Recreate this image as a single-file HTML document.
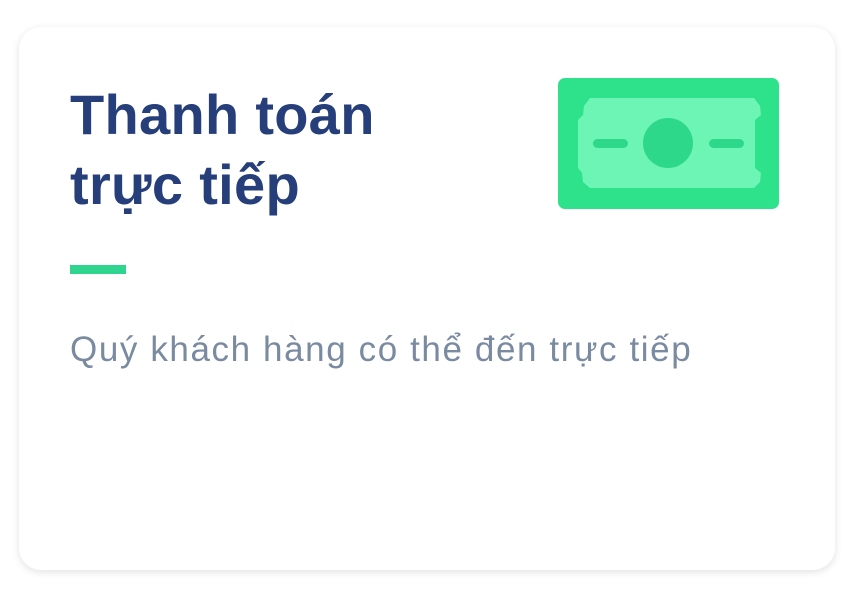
<!DOCTYPE html>
<html><head><meta charset="utf-8"><style>
body{margin:0;width:859px;height:600px;background:#fff;position:relative;overflow:hidden;font-family:"Liberation Sans",sans-serif}
.card{position:absolute;left:19px;top:27px;width:816px;height:543px;border-radius:22px;background:#fff;box-shadow:0 2px 8px rgba(0,0,0,.12)}
h1{position:absolute;left:70px;top:80px;margin:0;font-size:56px;line-height:70px;font-weight:bold;color:#263f7a;letter-spacing:0.3px}
.bar{position:absolute;left:70px;top:265px;width:56px;height:9px;background:#2fd58f}
p{position:absolute;left:70px;top:330px;margin:0;font-size:35px;color:#7a8aa0;white-space:nowrap;letter-spacing:1.6px}
svg{position:absolute;left:558px;top:78px}
</style></head><body>
<div class="card"></div>
<h1>Thanh toán<br>trực tiếp</h1>
<div class="bar"></div>
<p>Quý khách hàng có thể đến trực tiếp</p>
<svg width="221" height="131" viewBox="0 0 221 131">
<rect x="0" y="0" width="221" height="131" rx="7" fill="#2ee28c"/>
<path d="M32 20 H196 L202 28 L203 37 L197 42 V90 L203 95 L202 104 L196 110 H32 L25 104 L24 95 L20 90 V42 L25 37 L26 28 Z" fill="#6cf5b4"/>
<circle cx="110" cy="65" r="25" fill="#2ed88a"/>
<rect x="35" y="61" width="35" height="9" rx="4.5" fill="#2ed88a"/>
<rect x="151" y="61" width="35" height="9" rx="4.5" fill="#2ed88a"/>
</svg>
</body></html>
